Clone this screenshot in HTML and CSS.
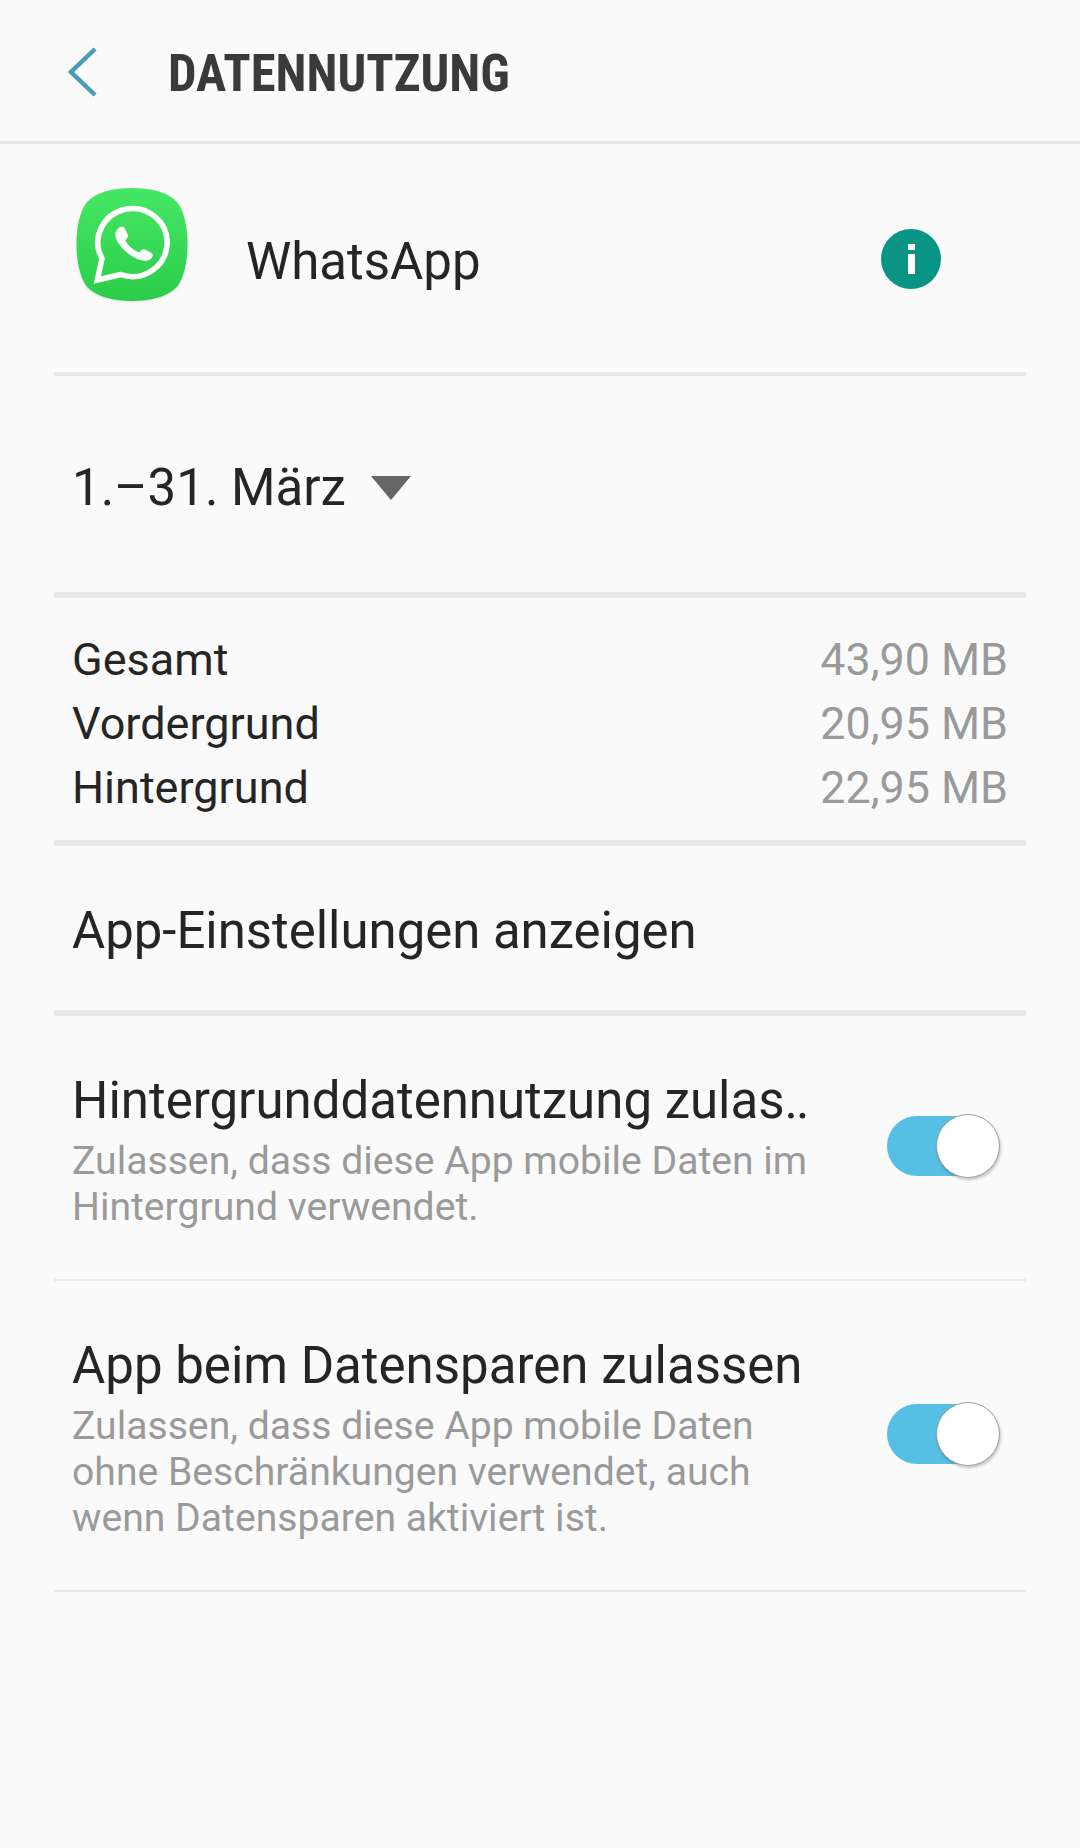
FILE: index.html
```html
<!DOCTYPE html>
<html lang="de">
<head>
<meta charset="utf-8">
<title>Datennutzung</title>
<link rel="stylesheet" href="styles.css">
</head>
<body>
<header class="topbar">
  <svg class="back" width="30" height="50" viewBox="0 0 30 50"><path d="M27 2 L3 25 L27 48" fill="none" stroke="#4a9bb8" stroke-width="4.5"/></svg>
  <h1 class="title">DATENNUTZUNG</h1>
</header>
<main class="content">
  <section class="app-row">
    <svg class="app-icon" width="112" height="114" viewBox="0 0 110 114" preserveAspectRatio="none">
      <defs><linearGradient id="wa" x1="0" y1="0" x2="0" y2="1"><stop offset="0" stop-color="#46e765"/><stop offset="1" stop-color="#2ccc4b"/></linearGradient></defs>
      <path d="M55 0 C72.500 0 90.500 4 99.500 14.500 C106.500 24 109.500 40 109.500 56 C109.500 72 106.500 90 98.500 99.500 C89.500 109 72.500 113 55 113 C37.500 113 20.500 109 11.500 99.500 C3.500 90 0.500 72 0.500 56 C0.500 40 3.500 24 10.500 14.500 C19.500 4 37.500 0 55 0 Z" fill="url(#wa)"/>
      <path d="M44 86.500 L21 92 L25.500 70.500 A34 34 0 1 1 44 86.500 Z" fill="none" stroke="#fff" stroke-width="5.500"/>
      <path d="M41 41 C43 38.500 47 38 48 40.500 L51 47 C51.600 49 50 50.500 48.500 52.500 C51 57.500 56 62 62 64.500 C63.500 63 65.500 61 67 61 L73.500 64.500 C76 66 76 68 74 70.500 C70.500 74 64 73.500 56.500 69 C48 64 42 57 39.500 51 C38 47 38.500 43.500 41 41 Z" fill="#fff"/>
    </svg>
    <span class="app-name">WhatsApp</span>
    <svg class="info" width="60" height="60" viewBox="0 0 60 60"><circle cx="30" cy="30" r="30" fill="#0a9484"/><rect x="27" y="15" width="7" height="6" fill="#fff"/><rect x="27" y="25" width="7" height="20" fill="#fff"/></svg>
  </section>
  <section class="date-row">
    <span class="date">1.–31. März</span>
    <svg class="caret" width="40" height="24" viewBox="0 0 40 24"><path d="M0 0 H40 L20 24 Z" fill="#666"/></svg>
  </section>
  <section class="stats">
    <div class="stat"><span>Gesamt</span><span class="val">43,90 MB</span></div>
    <div class="stat"><span>Vordergrund</span><span class="val">20,95 MB</span></div>
    <div class="stat"><span>Hintergrund</span><span class="val">22,95 MB</span></div>
  </section>
  <section class="link-row">App-Einstellungen anzeigen</section>
  <section class="toggle-row first">
    <div class="toggle-text">
      <div class="toggle-title">Hintergrunddatennutzung zulas<span class="dots">..</span></div>
      <div class="toggle-sub">Zulassen, dass diese App mobile Daten im<br>Hintergrund verwendet.</div>
    </div>
    <div class="switch"><div class="knob"></div></div>
  </section>
  <section class="toggle-row second">
    <div class="toggle-text">
      <div class="toggle-title">App beim Datensparen zulassen</div>
      <div class="toggle-sub">Zulassen, dass diese App mobile Daten<br>ohne Beschränkungen verwendet, auch<br>wenn Datensparen aktiviert ist.</div>
    </div>
    <div class="switch"><div class="knob"></div></div>
  </section>
</main>
</body>
</html>
```
FILE: styles.css
```css
* { box-sizing: border-box; }
html, body { margin: 0; padding: 0; }
body {
  width: 1080px;
  height: 1848px;
  overflow: hidden;
  background: #fafafa;
  color: #252525;
  font-family: Roboto, "Noto Sans", sans-serif;
}
.topbar {
  height: 144px;
  border-bottom: 3px solid #e8e8e8;
  display: flex;
  align-items: center;
  padding-left: 68px;
}
.back { flex: none; margin-top: 2px; }
.title {
  margin: 6px 0 0 70px;
  font-size: 52px;
  font-weight: 700;
  color: #3a3a3a;
  font-stretch: condensed;
  transform: scaleX(0.972);
  transform-origin: left center;
  white-space: nowrap;
}
.content { margin: 0 54px 0 54px; }
.app-row {
  height: 232px;
  border-bottom: 4px solid #e8e8e8;
  display: flex;
  align-items: center;
  padding-left: 22px;
}
.app-icon { flex: none; margin-bottom: 26px; filter: drop-shadow(0 1px 1px rgba(0,0,0,.12)); }
.app-name { margin: 6px 0 0 58px; font-size: 51px; }
.info { margin: 2px 85px 0 auto; flex: none; }
.date-row {
  height: 222px;
  border-bottom: 6px solid #e8e8e8;
  display: flex;
  align-items: center;
  padding: 6px 0 0 18px;
  font-size: 51px;
}
.caret { margin: 2px 0 0 25px; flex: none; }
.stats {
  height: 248px;
  border-bottom: 6px solid #e8e8e8;
  padding: 30px 18px 0;
  font-size: 45px;
}
.stat { display: flex; justify-content: space-between; height: 64px; line-height: 64px; }
.val { color: #9a9a9a; font-size: 44.8px; }
.link-row {
  height: 170px;
  border-bottom: 6px solid #e8e8e8;
  display: flex;
  align-items: center;
  padding: 5px 0 0 18px;
  font-size: 50.9px;
}
.toggle-row {
  border-bottom: 2px solid #e8e8e8;
  display: flex;
  align-items: center;
  padding: 0 29px 0 18px;
}
.toggle-row.first { height: 265px; }
.toggle-row.second { height: 311px; }
.toggle-text { flex: 1; min-width: 0; align-self: flex-start; margin-top: 55px; }
.toggle-title { font-size: 51px; line-height: 60px; margin-bottom: 7px; white-space: nowrap; }
.dots { letter-spacing: -2px; }
.toggle-sub { font-size: 39.15px; line-height: 46px; color: #9a9a9a; white-space: nowrap; }
.switch {
  flex: none;
  width: 110px;
  height: 60px;
  margin-bottom: 3px;
  border-radius: 30px;
  background: #56bfe4;
  position: relative;
}
.knob {
  position: absolute;
  right: -3px;
  top: -2px;
  width: 64px;
  height: 64px;
  border-radius: 50%;
  background: #fff;
  border: 1px solid #a0a0a0;
  box-shadow: 1px 2px 3px rgba(0,0,0,.22);
}
```
